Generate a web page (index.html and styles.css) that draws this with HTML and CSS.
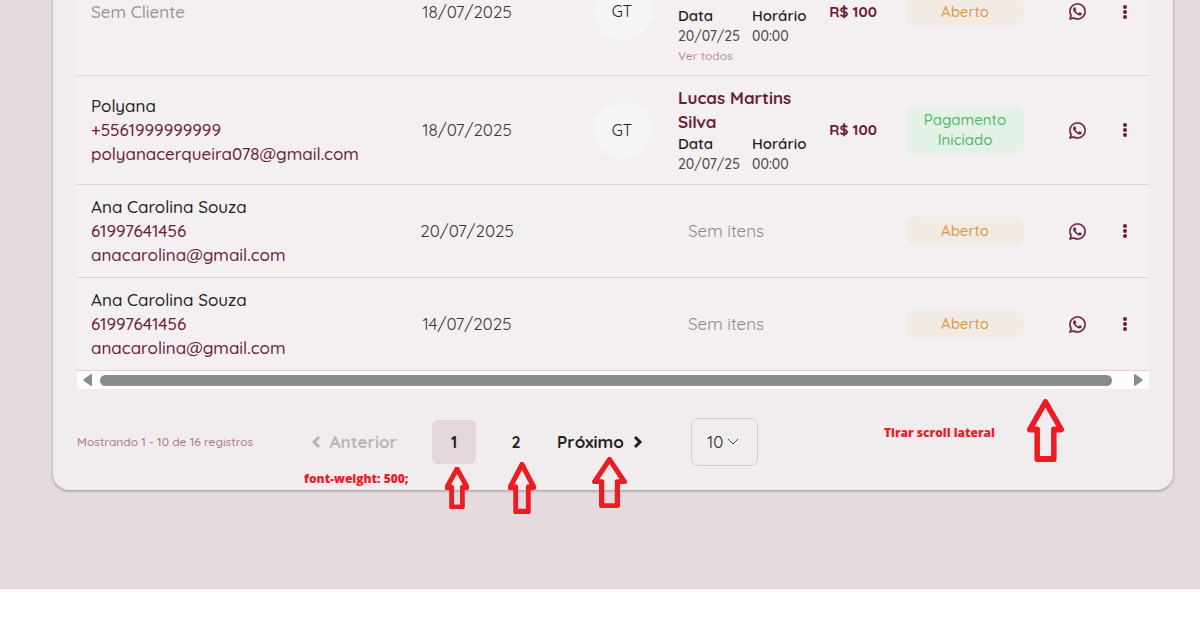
FILE: index.html
```html
<!DOCTYPE html>
<html lang="pt-BR">
<head>
  <meta charset="UTF-8">
  <title>Pedidos</title>
  <link rel="stylesheet" href="styles.css">
</head>
<body>
  <svg class="sprite" aria-hidden="true">
    <symbol id="whatsapp" viewBox="0 0 448 512">
      <path d="M380.9 97.1C339 55.1 283.2 32 223.9 32c-122.4 0-222 99.6-222 222 0 39.1 10.2 77.3 29.6 111L0 480l117.7-30.9c32.4 17.7 68.9 27 106.1 27h.1c122.3 0 224.1-99.6 224.1-222 0-59.3-25.2-115-67.1-157zm-157 341.6c-33.2 0-65.7-8.9-94-25.7l-6.7-4-69.8 18.3L72 359.2l-4.4-7c-18.5-29.4-28.2-63.3-28.2-98.2 0-101.7 82.8-184.5 184.6-184.5 49.3 0 95.6 19.2 130.4 54.1 34.8 34.9 56.2 81.2 56.1 130.5 0 101.8-84.9 184.6-186.6 184.6z"/>
      <path d="M325 300c-5-3-33-17-38-19-5-1-9-2-12 3s-15 19-18 22c-3 4-6 4-12 1-32-16-54-29-75-66-6-10 6-9 16-31 2-4 1-7-1-10-1-3-12-30-17-41-5-11-9-9-12-10h-11c-4 0-10 2-15 7s-19 19-19 46 20 54 23 57c3 4 39 60 95 84 35 15 49 17 67 14 10-2 32-14 37-27s5-24 3-26c-1-3-5-4-11-4z"/>
    </symbol>
    <symbol id="dots" viewBox="0 0 4 14">
      <circle cx="2" cy="2" r="2"/><circle cx="2" cy="7" r="2"/><circle cx="2" cy="12" r="2"/>
    </symbol>
    <symbol id="arrow" viewBox="0 0 40 64" preserveAspectRatio="none">
      <path d="M20 3 L37 31 H29 V61 H11 V31 H3 Z"/>
    </symbol>
  </svg>

  <main class="page">
    <section class="card">
      <table class="orders">
        <colgroup>
          <col>
          <col class="col-date">
          <col class="col-avatar">
          <col class="col-item">
          <col class="col-price">
          <col class="col-status">
          <col class="col-chat">
          <col class="col-menu">
        </colgroup>
        <tbody>
          <tr>
            <td class="client"><span class="muted">Sem Cliente</span></td>
            <td class="date">18/07/2025</td>
            <td><span class="avatar">GT</span></td>
            <td class="item">
              <a class="item-name" href="#">Lucas Martins Silva</a>
              <dl class="schedule">
                <div><dt>Data</dt><dd>20/07/25</dd></div>
                <div><dt>Horário</dt><dd>00:00</dd></div>
              </dl>
              <a class="see-all" href="#">Ver todos</a>
            </td>
            <td class="price">R$ 100</td>
            <td><span class="badge open">Aberto</span></td>
            <td><button class="icon-btn" aria-label="WhatsApp"><svg class="whatsapp"><use href="#whatsapp"/></svg></button></td>
            <td class="menu"><button class="icon-btn" aria-label="Opções"><svg class="dots"><use href="#dots"/></svg></button></td>
          </tr>
          <tr>
            <td class="client">
              <p>Polyana</p>
              <a href="tel:+5561999999999">+5561999999999</a>
              <a href="mailto:polyanacerqueira078@gmail.com">polyanacerqueira078@gmail.com</a>
            </td>
            <td class="date">18/07/2025</td>
            <td><span class="avatar">GT</span></td>
            <td class="item">
              <a class="item-name" href="#">Lucas Martins Silva</a>
              <dl class="schedule">
                <div><dt>Data</dt><dd>20/07/25</dd></div>
                <div><dt>Horário</dt><dd>00:00</dd></div>
              </dl>
            </td>
            <td class="price">R$ 100</td>
            <td><span class="badge started">Pagamento Iniciado</span></td>
            <td><button class="icon-btn" aria-label="WhatsApp"><svg class="whatsapp"><use href="#whatsapp"/></svg></button></td>
            <td class="menu"><button class="icon-btn" aria-label="Opções"><svg class="dots"><use href="#dots"/></svg></button></td>
          </tr>
          <tr>
            <td class="client">
              <p>Ana Carolina Souza</p>
              <a href="tel:61997641456">61997641456</a>
              <a href="mailto:anacarolina@gmail.com">anacarolina@gmail.com</a>
            </td>
            <td class="date">20/07/2025</td>
            <td></td>
            <td class="item empty">Sem itens</td>
            <td></td>
            <td><span class="badge open">Aberto</span></td>
            <td><button class="icon-btn" aria-label="WhatsApp"><svg class="whatsapp"><use href="#whatsapp"/></svg></button></td>
            <td class="menu"><button class="icon-btn" aria-label="Opções"><svg class="dots"><use href="#dots"/></svg></button></td>
          </tr>
          <tr>
            <td class="client">
              <p>Ana Carolina Souza</p>
              <a href="tel:61997641456">61997641456</a>
              <a href="mailto:anacarolina@gmail.com">anacarolina@gmail.com</a>
            </td>
            <td class="date">14/07/2025</td>
            <td></td>
            <td class="item empty">Sem itens</td>
            <td></td>
            <td><span class="badge open">Aberto</span></td>
            <td><button class="icon-btn" aria-label="WhatsApp"><svg class="whatsapp"><use href="#whatsapp"/></svg></button></td>
            <td class="menu"><button class="icon-btn" aria-label="Opções"><svg class="dots"><use href="#dots"/></svg></button></td>
          </tr>
        </tbody>
      </table>

      <div class="scrollbar">
        <svg class="scroll-arrow" viewBox="0 0 9 12"><path d="M9 1v10q0 1-1 1L1 7Q0 6 1 5L8 0q1 0 1 1z"/></svg>
        <div class="scroll-track"><div class="scroll-thumb"></div></div>
        <svg class="scroll-arrow" viewBox="0 0 9 12"><path d="M0 1v10q0 1 1 1l7-5q1-1 0-2L1 0Q0 0 0 1z"/></svg>
      </div>

      <nav class="pagination">
        <p class="info">Mostrando 1 - 10 de 16 registros</p>
        <button class="step" disabled>
          <svg class="chevron" viewBox="0 0 10 14"><path d="M8 2L3 7l5 5"/></svg>
          Anterior
        </button>
        <button class="number active">1</button>
        <button class="number">2</button>
        <button class="step next">
          Próximo
          <svg class="chevron" viewBox="0 0 10 14"><path d="M2 2l5 5-5 5"/></svg>
        </button>
        <div class="page-size">
          <select aria-label="Registros por página">
            <option>10</option>
            <option>20</option>
            <option>50</option>
          </select>
          <svg viewBox="0 0 12 8"><path d="M1 1l5 5 5-5"/></svg>
        </div>
      </nav>
    </section>

    <!-- Anotações de revisão -->
    <p class="note note-weight">font-weight: 500;</p>
    <p class="note note-scroll">Tirar scroll lateral</p>
    <svg class="arrow arrow-one"><use href="#arrow"/></svg>
    <svg class="arrow arrow-two"><use href="#arrow"/></svg>
    <svg class="arrow arrow-next"><use href="#arrow"/></svg>
    <svg class="arrow arrow-scroll"><use href="#arrow"/></svg>
  </main>
</body>
</html>
```
FILE: styles.css
```css
* {
  box-sizing: border-box;
}

body {
  margin: 0;
  overflow: hidden;
  background-color: #fff;
  color: #231f20;
  font-family: Quicksand, Lato, sans-serif;
  font-size: 17px;
  line-height: 24px;
}

p, dl, dd {
  margin: 0;
}

a {
  color: #6b1d3c;
  text-decoration: none;
}

button, select {
  font: inherit;
  color: inherit;
  border: none;
  background: none;
  padding: 0;
  cursor: pointer;
}

.sprite {
  display: none;
}

.page {
  display: flow-root;
  position: relative;
  padding: 0 27px 99px 53px;
  background-color: #e5dbdf;
}

/* a lista já aparece rolada até o final */
.card {
  margin-top: -52px;
  padding: 0 24px 24px;
  background-color: #f1edee;
  border-radius: 0 0 16px 16px;
  box-shadow: 0 1px 3px rgba(0, 0, 0, 0.35);
}

/* Tabela */
.orders {
  width: 100%;
  table-layout: fixed;
  border-collapse: collapse;
  background-color: #f4f0f1;
}

.col-date { width: 198px; }
.col-avatar { width: 112px; }
.col-item { width: 142px; }
.col-price { width: 66px; }
.col-status { width: 158px; }
.col-chat { width: 66px; }
.col-menu { width: 39px; }

.orders td {
  padding: 10px 0;
  border-bottom: 1px solid #e0d0d6;
  text-align: center;
}

.orders .client {
  padding-left: 14px;
  font-weight: 500;
  text-align: left;
  white-space: nowrap;
}

.client a, .item a {
  display: block;
}

.muted {
  color: #999596;
}

.date {
  color: #3a3637;
}

.avatar {
  display: inline-block;
  width: 57px;
  height: 57px;
  border-radius: 50%;
  background-color: #f5f5f5;
  font-size: 16px;
  line-height: 57px;
  vertical-align: middle;
}

.orders .item {
  text-align: left;
}

.item-name {
  width: 120px;
  font-weight: 700;
}

.schedule {
  display: flex;
  gap: 12px;
  font-size: 15px;
  line-height: 20px;
}

.schedule dt {
  font-weight: 600;
}

.schedule dd {
  color: #4a4647;
  font-size: 14px;
  font-weight: 500;
}

.item .see-all {
  color: #b58a9b;
  font-size: 12px;
  font-weight: 500;
  line-height: 19px;
}

.orders .empty {
  padding-left: 10px;
  color: #8c8889;
}

.price {
  color: #6b1d3c;
  font-size: 15px;
  font-weight: 700;
}

.badge {
  display: block;
  width: 118px;
  margin: 0 auto;
  padding: 4px 16px;
  border-radius: 9px;
  font-size: 15px;
  font-weight: 500;
  line-height: 20px;
}

.badge.open {
  color: #e0964a;
  background-color: #f1ebe4;
}

.badge.started {
  color: #50b86c;
  background-color: #e3f1e6;
}

.icon-btn {
  display: block;
  margin: 0 auto;
  color: #6b1d3c;
}

.icon-btn svg {
  display: block;
  fill: currentColor;
}

.whatsapp {
  width: 17px;
  height: 19px;
  stroke: currentColor;
  stroke-width: 8;
}

.dots {
  width: 4px;
  height: 14px;
}

.orders .menu {
  padding-right: 9px;
}

/* Barra de rolagem */
.scrollbar {
  display: flex;
  align-items: center;
  height: 18px;
  padding: 0 6px;
  background-color: #fcfcfc;
}

.scroll-arrow {
  width: 9px;
  height: 12px;
  fill: #8b8b8b;
}

.scroll-track {
  flex: 1;
  padding: 0 22px 0 8px;
}

.scroll-thumb {
  height: 11px;
  border-radius: 6px;
  background-color: #8b8b8b;
}

/* Paginação */
.pagination {
  display: flex;
  align-items: center;
  margin-top: 29px;
}

.info {
  width: 234px;
  color: #a9748a;
  font-size: 12px;
  font-weight: 500;
}

.step {
  display: flex;
  align-items: center;
  justify-content: space-between;
  width: 86px;
  font-weight: 700;
}

.step:disabled {
  color: #b9b5b6;
  cursor: default;
}

.chevron {
  width: 10px;
  height: 14px;
  fill: none;
  stroke: currentColor;
  stroke-width: 3;
}

.number {
  width: 44px;
  height: 44px;
  margin-left: 18px;
  border-radius: 6px;
  font-size: 16px;
  font-weight: 700;
}

.number.active {
  margin-left: 35px;
  background-color: #e3d7db;
}

.next {
  margin-left: 19px;
}

.page-size {
  position: relative;
  margin-left: 48px;
}

.page-size select {
  display: block;
  width: 67px;
  height: 48px;
  padding-left: 15px;
  border: 1px solid #dcc8d0;
  border-radius: 7px;
  appearance: none;
}

.page-size svg {
  position: absolute;
  top: 20px;
  right: 19px;
  width: 12px;
  height: 8px;
  fill: none;
  stroke: #4a4647;
  pointer-events: none;
}

/* Anotações */
.note {
  position: absolute;
  color: #ed1c24;
  font-family: "Open Sans", "Noto Sans", sans-serif;
  font-size: 12px;
  font-weight: 800;
  line-height: 16px;
  white-space: nowrap;
}

.note-weight {
  top: 471px;
  left: 304px;
}

.note-scroll {
  top: 425px;
  left: 884px;
}

.arrow {
  position: absolute;
  fill: none;
  stroke: #ed1c24;
  stroke-width: 6;
  stroke-linejoin: round;
}

.arrow-one {
  top: 467px;
  left: 445px;
  width: 24px;
  height: 42px;
  stroke-width: 8;
}

.arrow-two {
  top: 462px;
  left: 508px;
  width: 28px;
  height: 52px;
  stroke-width: 7;
}

.arrow-next {
  top: 457px;
  left: 592px;
  width: 35px;
  height: 51px;
}

.arrow-scroll {
  top: 399px;
  left: 1027px;
  width: 37px;
  height: 63px;
}
```
